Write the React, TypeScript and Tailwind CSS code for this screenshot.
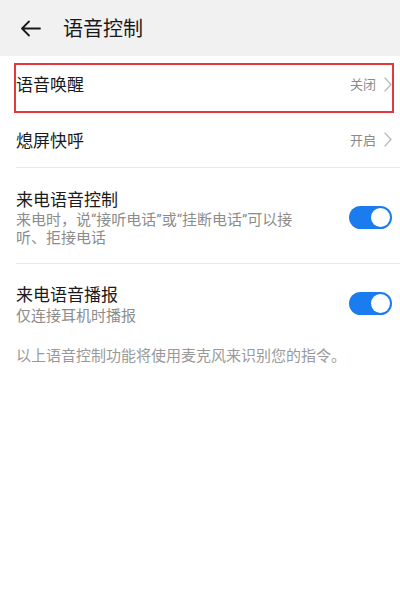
import React from "react";

function Chevron() {
  return (
    <svg width="8" height="15" viewBox="0 0 8 15" className="ml-[8px]">
      <path d="M1 1l6 6.5L1 14" stroke="#bdbdbd" strokeWidth="1.4" fill="none" strokeLinecap="round" strokeLinejoin="round" />
    </svg>
  );
}

function Toggle() {
  return (
    <div className="w-[43px] h-[23px] rounded-full bg-[#1a7cee] flex items-center justify-end pr-[2px] shrink-0">
      <div className="w-[19px] h-[19px] rounded-full bg-white" />
    </div>
  );
}

export default function App() {
  return (
    <div className="w-[400px] h-[600px] bg-white overflow-hidden font-['Noto_Sans_CJK_SC',sans-serif]">
      <div className="h-[56px] bg-[#f1f1f1] flex items-center">
        <svg className="ml-[20px]" width="21" height="17" viewBox="0 0 21 17">
          <path d="M20 8.5H2M9 1.5L2 8.5l7 7" stroke="#1a1a1a" strokeWidth="1.8" fill="none" strokeLinecap="round" strokeLinejoin="round" />
        </svg>
        <span className="ml-[22px] text-[20px] leading-[28px] text-[#1a1a1a]">语音控制</span>
      </div>

      <div className="relative h-[56px] flex items-center pl-4 pr-[8px]">
        <span className="flex-1 text-[17px] leading-[22px] text-[#1a1a1a]">语音唤醒</span>
        <span className="text-[13px] text-[#8a8a8a]">关闭</span>
        <Chevron />
        <div className="absolute left-[14px] top-[7px] w-[380px] h-[50px] border-2 border-[#e3383d]" />
      </div>

      <div className="ml-4 h-[56px] flex items-center pr-[8px] border-b border-[#e8e8e8]">
        <span className="flex-1 text-[17px] leading-[22px] text-[#1a1a1a]">熄屏快呼</span>
        <span className="text-[13px] text-[#8a8a8a]">开启</span>
        <Chevron />
      </div>

      <div className="ml-4 flex items-center pr-[8px] pt-[20px] pb-[16px] border-b border-[#e8e8e8]">
        <div className="flex-1">
          <div className="text-[17px] leading-[22px] text-[#1a1a1a]">来电语音控制</div>
          <div className="mt-[1px] w-[284px] text-[15px] leading-[18px] text-[#8c8c8c] font-['Roboto','Noto_Sans_CJK_SC',sans-serif]">
            来电时，说“接听电话”或“挂断电话”可以接听、拒接电话
          </div>
        </div>
        <Toggle />
      </div>

      <div className="ml-4 flex items-center pr-[8px] pt-[19px]">
        <div className="flex-1">
          <div className="text-[17px] leading-[22px] text-[#1a1a1a]">来电语音播报</div>
          <div className="mt-[1px] text-[15px] leading-[18px] text-[#8c8c8c]">仅连接耳机时播报</div>
        </div>
        <Toggle />
      </div>

      <div className="ml-4 mt-[22px] text-[15px] leading-[18px] text-[#999999]">
        以上语音控制功能将使用麦克风来识别您的指令。
      </div>
    </div>
  );
}
